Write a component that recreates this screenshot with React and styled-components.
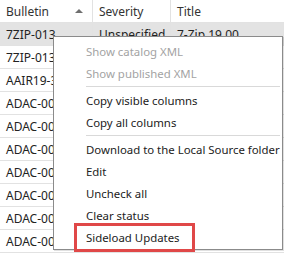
import React from 'react';
import styled, { createGlobalStyle } from 'styled-components';

const GlobalStyle = createGlobalStyle`
  html, body {
    margin: 0;
    padding: 0;
    background: #fff;
  }
  body {
    font-family: "Segoe UI", "Noto Sans", "Liberation Sans", sans-serif;
    font-size: 12px;
    color: #222;
  }
`;

const Page = styled.div`
  position: relative;
  width: 284px;
  height: 254px;
  overflow: hidden;
  background: #fff;
`;

const Grid = styled.div`
  display: flex;
  flex-direction: column;
`;

const Row = styled.div`
  display: grid;
  grid-template-columns: 93px 78px 1fr;
  height: 23px;
  box-sizing: border-box;
  border-bottom: 1px solid #e2e2e2;
  background: ${p => (p.$selected ? '#e3e3e3' : '#fff')};
`;

const Cell = styled.div`
  display: flex;
  align-items: center;
  padding: 0 6px;
  border-right: 1px solid #e2e2e2;
  white-space: nowrap;
  overflow: hidden;
  color: #222;
  &:last-child {
    border-right: none;
  }
`;

const HeaderCell = styled(Cell)`
  justify-content: space-between;
  color: #333;
`;

const SortArrow = styled.span`
  width: 0;
  height: 0;
  margin-right: 3px;
  border-left: 4px solid transparent;
  border-right: 4px solid transparent;
  border-bottom: 4px solid #6f6f6f;
`;

const Menu = styled.ul`
  position: absolute;
  left: 53px;
  top: 36px;
  width: 230px;
  height: 214px;
  box-sizing: border-box;
  margin: 0;
  padding: 3px 0 2px;
  list-style: none;
  background: #fff;
  border: 1px solid #8b8b8b;
  box-shadow: 1px 1px 0 rgba(0, 0, 0, 0.12);
  font-size: 11.4px;
`;

const Item = styled.li`
  position: relative;
  height: 22px;
  display: flex;
  align-items: center;
  padding-left: 32px;
  white-space: nowrap;
  color: ${p => (p.$disabled ? '#a3a3a3' : '#222')};
`;

const Separator = styled.li`
  height: 1px;
  margin: 2px 2px 2px 32px;
  background: #d9d9d9;
`;

const Highlight = styled.span`
  position: absolute;
  left: 20px;
  top: -3px;
  width: 121px;
  height: 29px;
  box-sizing: border-box;
  border: 3px solid #e04848;
`;

const rows = [
  ['7ZIP-013', 'Unspecified', '7-Zip 19.00'],
  ['7ZIP-013', 'Unspecified', '7-Zip 19.00'],
  ['AAIR19-3.1', 'Unspecified', 'Adobe AIR'],
  ['ADAC-001', 'Unspecified', 'Adobe Acrobat'],
  ['ADAC-002', 'Unspecified', 'Adobe Acrobat'],
  ['ADAC-003', 'Unspecified', 'Adobe Acrobat'],
  ['ADAC-004', 'Unspecified', 'Adobe Acrobat'],
  ['ADAC-005', 'Unspecified', 'Adobe Acrobat'],
  ['ADAC-006', 'Unspecified', 'Adobe Acrobat'],
  ['ADAC-007', 'Unspecified', 'Adobe Acrobat'],
];

export default function App() {
  return (
    <Page>
      <GlobalStyle />
      <Grid>
        <Row>
          <HeaderCell>
            Bulletin
            <SortArrow />
          </HeaderCell>
          <HeaderCell>Severity</HeaderCell>
          <HeaderCell>Title</HeaderCell>
        </Row>
        {rows.map((r, i) => (
          <Row key={i} $selected={i === 0}>
            <Cell>{r[0]}</Cell>
            <Cell>{r[1]}</Cell>
            <Cell>{r[2]}</Cell>
          </Row>
        ))}
      </Grid>

      <Menu>
        <Item $disabled>Show catalog XML</Item>
        <Item $disabled>Show published XML</Item>
        <Separator />
        <Item>Copy visible columns</Item>
        <Item>Copy all columns</Item>
        <Separator />
        <Item>Download to the Local Source folder</Item>
        <Item>Edit</Item>
        <Item>Uncheck all</Item>
        <Item>Clear status</Item>
        <Item>
          Sideload Updates
          <Highlight />
        </Item>
      </Menu>
    </Page>
  );
}
